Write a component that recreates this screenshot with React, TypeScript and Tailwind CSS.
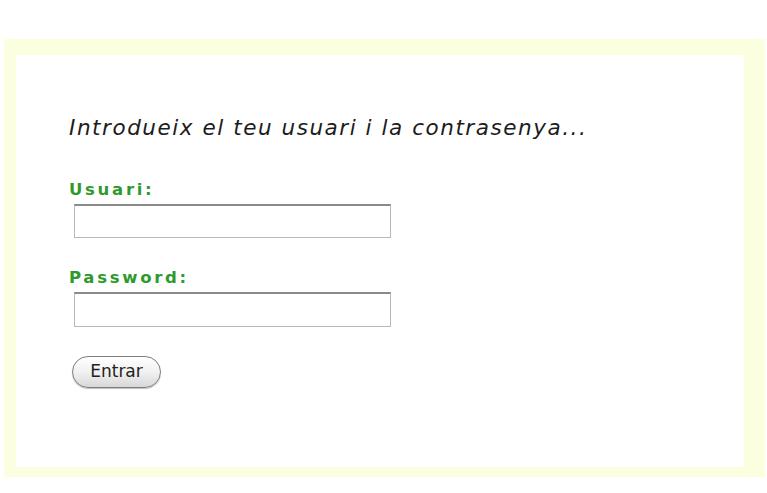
export default function App() {
  return (
    <div className="min-h-[493px] bg-white pt-[39px] pl-[4px] pr-[2px]">
      <div className="bg-[#fcfee0] pt-[16px] pl-[12px] pr-[21px] pb-[10px]">
        <div className="h-[412px] bg-white pl-[53px] pt-[60px]">
          <p className="text-[21.5px] italic tracking-[1.55px] text-[#1c1c1c] font-['DejaVu_Sans',sans-serif] leading-[26px]">
            Introdueix el teu usuari i la contrasenya...
          </p>

          <form className="mt-[39px] flex flex-col font-['DejaVu_Sans',sans-serif]">
            <label className="text-[16.5px] font-bold tracking-[2.7px] text-[#2f9a2c] leading-[20px]">
              Usuari:
            </label>
            <input
              type="text"
              className="mt-[4px] ml-[5px] h-[34px] w-[317px] border border-[#b9b9b9] border-t-[2px] border-t-[#8a8a8a] bg-white"
            />

            <label className="mt-[30px] text-[16.5px] font-bold tracking-[2.7px] text-[#2f9a2c] leading-[20px]">
              Password:
            </label>
            <input
              type="password"
              className="mt-[4px] ml-[5px] h-[35px] w-[317px] border border-[#b9b9b9] border-t-[2px] border-t-[#8a8a8a] bg-white"
            />

            <button
              type="button"
              className="mt-[29px] ml-[3px] h-[32px] w-[89px] rounded-full border border-[#7e7e7e] bg-gradient-to-b from-white via-[#f1f1f1] to-[#d8d8d8] text-[17px] text-[#222] font-['DejaVu_Sans',sans-serif] shadow-[0_1px_1px_rgba(0,0,0,0.25)]"
            >
              Entrar
            </button>
          </form>
        </div>
      </div>
    </div>
  );
}
